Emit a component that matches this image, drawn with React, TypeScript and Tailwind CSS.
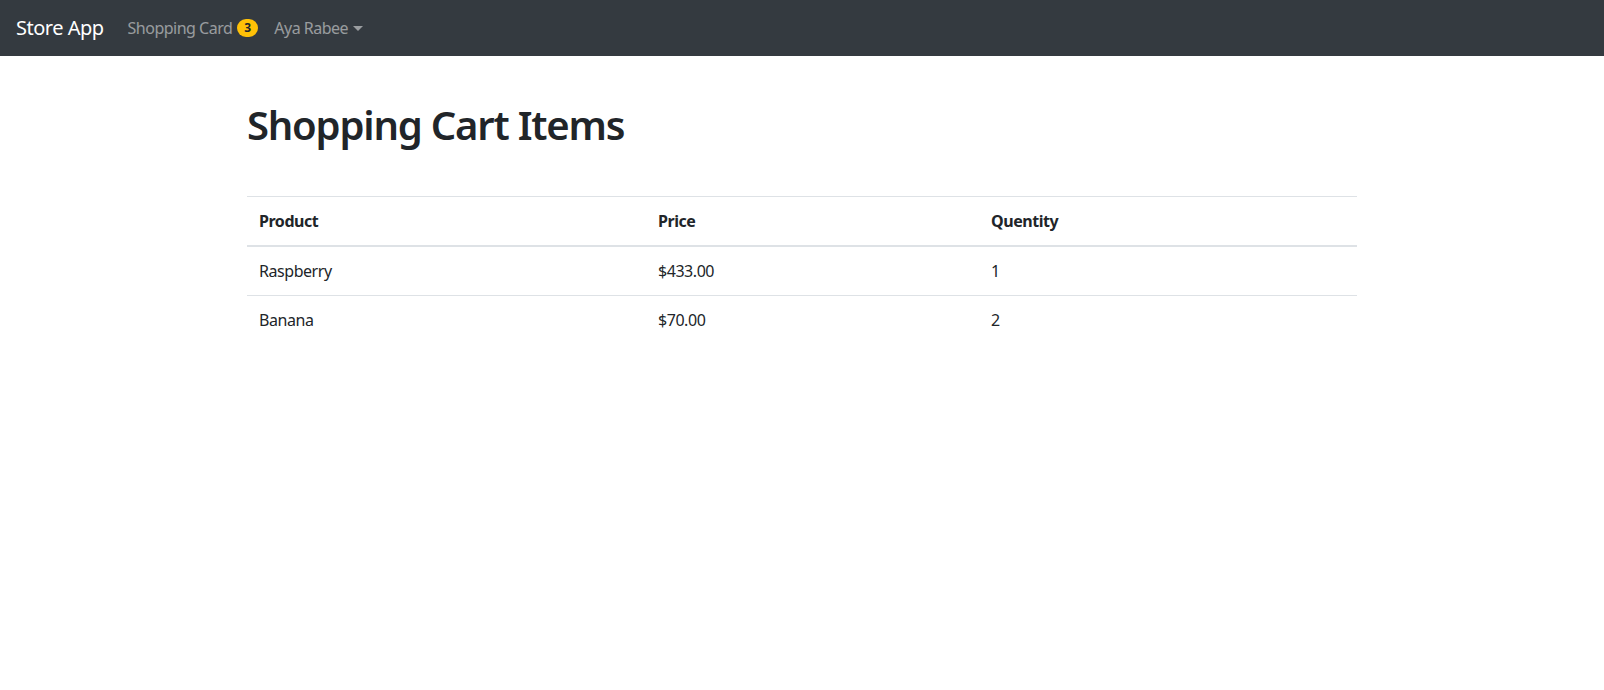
import React from "react";

const rows = [
  { name: "Raspberry", price: "$433.00", qty: 1 },
  { name: "Banana", price: "$70.00", qty: 2 },
];

export default function App() {
  return (
    <div className="min-h-[690px] bg-white text-[#212529] font-['Noto_Sans',sans-serif]">
      <nav className="flex h-[56px] items-center bg-[#343a40] px-4">
        <a className="mr-4 text-[20px] leading-[30px] tracking-[-0.5px] text-white">Store App</a>
        <div className="flex items-center text-[16px] tracking-[-0.5px]">
          <a className="flex items-center px-2 text-[rgba(255,255,255,0.5)]">
            Shopping Card
            <span className="ml-[5px] inline-flex h-[18px] min-w-[21px] items-center justify-center rounded-full bg-[#ffc107] px-[6px] text-[12px] font-bold leading-none tracking-normal text-[#212529]">
              3
            </span>
          </a>
          <a className="flex items-center px-2 text-[rgba(255,255,255,0.5)]">
            Aya Rabee
            <span className="ml-[5px] inline-block h-0 w-0 border-x-[5px] border-t-[5px] border-x-transparent border-t-[rgba(255,255,255,0.5)]" />
          </a>
        </div>
      </nav>
      <main className="mx-auto w-[1140px] px-[15px]">
        <h1 className="mt-[45px] mb-[47px] text-[40px] font-semibold leading-[48px] tracking-[-1.2px]">Shopping Cart Items</h1>
        <table className="w-full border-collapse text-[16px] tracking-[-0.45px]">
          <thead>
            <tr className="border-t border-b-2 border-t-[#dee2e6] border-b-[#dee2e6]">
              <th className="w-[399px] p-3 text-left font-bold leading-6">Product</th>
              <th className="w-[333px] p-3 text-left font-bold leading-6">Price</th>
              <th className="p-3 text-left font-bold leading-6">Quentity</th>
            </tr>
          </thead>
          <tbody>
            {rows.map((r, i) => (
              <tr key={r.name} className={i === 0 ? "border-b border-[#dee2e6]" : ""}>
                <td className="p-3 leading-6">{r.name}</td>
                <td className="p-3 leading-6">{r.price}</td>
                <td className="p-3 leading-6">{r.qty}</td>
              </tr>
            ))}
          </tbody>
        </table>
      </main>
    </div>
  );
}
